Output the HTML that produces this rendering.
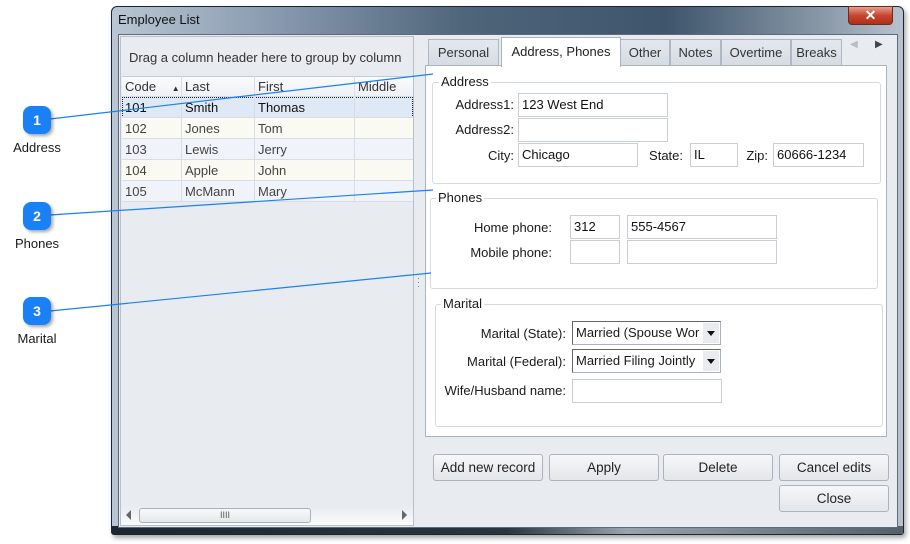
<!DOCTYPE html>
<html><head><style>
*{box-sizing:border-box}
body{margin:0;width:910px;height:544px;background:#fff;font-family:"Liberation Sans",sans-serif;font-size:13px;color:#1a1a1a;position:relative;overflow:hidden}
.a{position:absolute}
.win{left:111px;top:6px;width:793px;height:529px;border:1px solid #1c2631;border-radius:6px 6px 3px 3px;background:linear-gradient(90deg,#b9c6d3 0%,#8a9bb0 20%,#4e6479 45%,#3e556c 70%,#8a99a8 90%,#b7c2cc 100%);box-shadow:2px 3px 5px rgba(0,0,0,.35)}
.client{left:118px;top:34px;width:780px;height:494px;background:#e8ebf0;border:1px solid #5b6b7c}
.inp{position:absolute;background:#fff;border:1px solid #c9ced5;height:24px;padding:3px 3px;font-size:13px;color:#111;white-space:nowrap;overflow:hidden}
.lbl{position:absolute;font-size:13px;text-align:right}
.gb{position:absolute;border:1px solid #d3dae4;border-radius:3px}
.gbt{position:absolute;background:#fff;padding:0 2px;font-size:13px}
.btn{position:absolute;height:27px;border:1px solid #acb3bc;border-radius:3px;background:linear-gradient(#f6f7f9,#e3e6ea);text-align:center;line-height:25px;font-size:13.5px;color:#222}
.tab{position:absolute;top:39px;height:27px;background:linear-gradient(#e4e8ee,#d5dbe3);border:1px solid #aeb7c2;border-bottom:none;text-align:center;line-height:26px;font-size:13px;color:#333}
.cell{position:absolute;height:21px;line-height:21px;padding-left:3px;font-size:13px;border-right:1px solid #d7dde5;border-bottom:1px solid #d7dde5;white-space:nowrap;overflow:hidden}
.sel{position:absolute;border:1px solid #aab3bd;background:#fff;height:24px;font-size:13px;padding:3px 3px;border-top-color:#666;border-left-color:#666;white-space:nowrap;overflow:hidden}
.dd{position:absolute;right:1px;top:1px;width:16px;height:20px;background:#e9ebee}
.dd:after{content:"";position:absolute;left:4px;top:8px;border:4px solid transparent;border-top:5px solid #111}
.num{position:absolute;width:28px;height:28px;border-radius:8px;background:#1a80f5;color:#fff;font-weight:bold;text-align:center;line-height:28px;font-size:14px;box-shadow:2px 2px 3px rgba(0,0,0,.35)}
.cl{position:absolute;font-size:13px;width:74px;text-align:center}
</style></head><body>
<div class="a win"></div>
<div class="a" style="left:112px;top:526px;width:791px;height:8px;background:linear-gradient(90deg,#1d2731,#2a3540 50%,#9aa3ad 65%,#55606b)"></div>
<div class="a" style="left:118px;top:12px;font-size:13px;color:#111">Employee List</div>
<div class="a" style="left:848px;top:6px;width:45px;height:19px;border:1px solid #6b2a22;border-radius:0 0 4px 4px;background:linear-gradient(#e6a090,#c8452f 50%,#b02e18);color:#fff;text-align:center;font-weight:bold;font-size:14px;line-height:17px">✕</div>
<div class="a client"></div>
<div class="a" style="left:120px;top:36px;width:294px;height:490px;background:#e8ebf0;border:1px solid #b8c0ca"></div>
<div class="a" style="left:129px;top:50px;font-size:13px;color:#333">Drag a column header here to group by column</div>
<div class="a" style="left:122px;top:76px;width:291px;height:21px;background:linear-gradient(#fafbfc,#eef1f5);border-top:1px solid #c6ccd4;border-bottom:1px solid #c6ccd4"></div>
<div class="cell" style="left:122px;top:76px;width:60px;color:#333">Code <span style="font-size:8px;margin-left:12px">▲</span></div>
<div class="cell" style="left:182px;top:76px;width:73px;color:#333">Last</div>
<div class="cell" style="left:255px;top:76px;width:100px;color:#333">First</div>
<div class="cell" style="left:355px;top:76px;width:58px;color:#333;border-right:none">Middle</div>
<div class="a" style="left:122px;top:97px;width:291px;height:21px;background:#dfe9f5;border:1px dotted #222"></div>
<div class="a" style="left:122px;top:118px;width:291px;height:21px;background:#fbfaf2"></div>
<div class="a" style="left:122px;top:139px;width:291px;height:21px;background:#f0f4fa"></div>
<div class="a" style="left:122px;top:160px;width:291px;height:21px;background:#fbfaf2"></div>
<div class="a" style="left:122px;top:181px;width:291px;height:21px;background:#f0f4fa"></div>
<div class="cell" style="left:122px;top:97px;width:60px;color:#111">101</div><div class="cell" style="left:182px;top:97px;width:73px;color:#111">Smith</div><div class="cell" style="left:255px;top:97px;width:100px;color:#111">Thomas</div><div class="cell" style="left:355px;top:97px;width:58px;border-right:none"></div>
<div class="cell" style="left:122px;top:118px;width:60px;color:#444">102</div><div class="cell" style="left:182px;top:118px;width:73px;color:#444">Jones</div><div class="cell" style="left:255px;top:118px;width:100px;color:#444">Tom</div><div class="cell" style="left:355px;top:118px;width:58px;border-right:none"></div>
<div class="cell" style="left:122px;top:139px;width:60px;color:#444">103</div><div class="cell" style="left:182px;top:139px;width:73px;color:#444">Lewis</div><div class="cell" style="left:255px;top:139px;width:100px;color:#444">Jerry</div><div class="cell" style="left:355px;top:139px;width:58px;border-right:none"></div>
<div class="cell" style="left:122px;top:160px;width:60px;color:#444">104</div><div class="cell" style="left:182px;top:160px;width:73px;color:#444">Apple</div><div class="cell" style="left:255px;top:160px;width:100px;color:#444">John</div><div class="cell" style="left:355px;top:160px;width:58px;border-right:none"></div>
<div class="cell" style="left:122px;top:181px;width:60px;color:#444">105</div><div class="cell" style="left:182px;top:181px;width:73px;color:#444">McMann</div><div class="cell" style="left:255px;top:181px;width:100px;color:#444">Mary</div><div class="cell" style="left:355px;top:181px;width:58px;border-right:none"></div>
<div class="a" style="left:121px;top:506px;width:292px;height:19px;background:linear-gradient(#e8ebf0,#fafbfc)"></div>
<div class="a" style="left:139px;top:508px;width:172px;height:15px;border:1px solid #aab1ba;border-radius:3px;background:linear-gradient(#f8f9fa,#e6e8eb);text-align:center;font-size:9px;line-height:13px;color:#555">IIII</div>
<div class="a" style="left:126px;top:510px;border:5px solid transparent;border-right:5px solid #666;border-left:none"></div>
<div class="a" style="left:402px;top:510px;border:5px solid transparent;border-left:5px solid #666;border-right:none"></div>
<div class="a" style="left:417px;top:276px;font-size:9px;color:#777;line-height:4px">·<br>·<br>·</div>
<div class="tab" style="left:428px;width:71px">Personal</div>
<div class="tab" style="left:620px;width:50px">Other</div>
<div class="tab" style="left:670px;width:51px">Notes</div>
<div class="tab" style="left:721px;width:70px">Overtime</div>
<div class="tab" style="left:791px;width:51px">Breaks</div>
<div class="a" style="left:425px;top:65px;width:462px;height:372px;background:#fff;border:1px solid #a9b3be"></div>
<div class="tab" style="left:501px;top:37px;width:120px;height:30px;background:#fff;border-color:#a9b3be;color:#222;line-height:28px">Address, Phones</div>
<div class="a" style="left:850px;top:39px;font-size:10px;color:#bbb">◀</div>
<div class="a" style="left:875px;top:39px;font-size:10px;color:#444">▶</div>
<div class="gb" style="left:432px;top:82px;width:449px;height:102px"></div>
<div class="gbt" style="left:439px;top:74px">Address</div>
<div class="lbl" style="left:440px;top:97px;width:74px">Address1:</div>
<div class="inp" style="left:518px;top:93px;width:150px">123 West End</div>
<div class="lbl" style="left:440px;top:122px;width:74px">Address2:</div>
<div class="inp" style="left:518px;top:118px;width:150px"></div>
<div class="lbl" style="left:440px;top:148px;width:74px">City:</div>
<div class="inp" style="left:518px;top:143px;width:120px">Chicago</div>
<div class="lbl" style="left:640px;top:148px;width:43px">State:</div>
<div class="inp" style="left:690px;top:143px;width:48px">IL</div>
<div class="lbl" style="left:740px;top:148px;width:28px">Zip:</div>
<div class="inp" style="left:773px;top:143px;width:91px">60666-1234</div>
<div class="gb" style="left:430px;top:198px;width:448px;height:91px"></div>
<div class="gbt" style="left:436px;top:190px">Phones</div>
<div class="lbl" style="left:440px;top:220px;width:112px">Home phone:</div>
<div class="inp" style="left:570px;top:215px;width:50px">312</div>
<div class="inp" style="left:627px;top:215px;width:150px">555-4567</div>
<div class="lbl" style="left:440px;top:245px;width:112px">Mobile phone:</div>
<div class="inp" style="left:570px;top:240px;width:50px"></div>
<div class="inp" style="left:627px;top:240px;width:150px"></div>
<div class="gb" style="left:435px;top:304px;width:448px;height:123px"></div>
<div class="gbt" style="left:441px;top:296px">Marital</div>
<div class="lbl" style="left:440px;top:326px;width:126px">Marital (State):</div>
<div class="sel" style="left:572px;top:321px;width:149px">Married (Spouse Wor<div class="dd"></div></div>
<div class="lbl" style="left:440px;top:354px;width:126px">Marital (Federal):</div>
<div class="sel" style="left:572px;top:349px;width:149px">Married Filing Jointly<div class="dd"></div></div>
<div class="lbl" style="left:430px;top:383px;width:136px">Wife/Husband name:</div>
<div class="inp" style="left:572px;top:379px;width:150px"></div>
<div class="btn" style="left:433px;top:454px;width:110px">Add new record</div>
<div class="btn" style="left:549px;top:454px;width:110px">Apply</div>
<div class="btn" style="left:663px;top:454px;width:110px">Delete</div>
<div class="btn" style="left:779px;top:454px;width:110px">Cancel edits</div>
<div class="btn" style="left:779px;top:485px;width:110px">Close</div>
<svg class="a" style="left:0;top:0" width="910" height="544"><g stroke="#1a80f5" stroke-width="1.2" fill="none">
<line x1="50" y1="119" x2="433" y2="74"/><line x1="50" y1="215" x2="433" y2="190"/><line x1="50" y1="311" x2="431" y2="273"/></g></svg>
<div class="num" style="left:23px;top:106px">1</div>
<div class="num" style="left:23px;top:202px">2</div>
<div class="num" style="left:23px;top:297px">3</div>
<div class="cl" style="left:0;top:140px">Address</div>
<div class="cl" style="left:0;top:236px">Phones</div>
<div class="cl" style="left:0;top:331px">Marital</div>
</body></html>
